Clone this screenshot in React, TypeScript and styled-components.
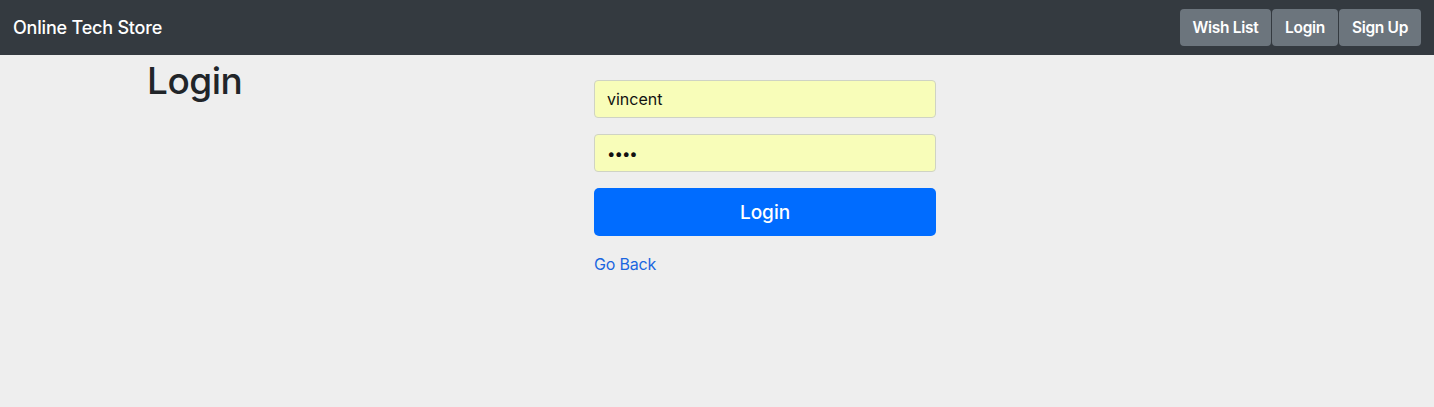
import React from "react";
import styled, { createGlobalStyle } from "styled-components";

const Global = createGlobalStyle`
  html, body { margin: 0; padding: 0; }
  body {
    background: #eeeeee;
    font-family: Inter, "Helvetica Neue", "Liberation Sans", Arial, sans-serif;
    color: #212529;
    min-height: 407px;
  }
  * { box-sizing: border-box; }
`;

const Navbar = styled.nav`
  height: 55px;
  background: #343a40;
  display: flex;
  align-items: center;
  justify-content: space-between;
  padding: 0 13px;
`;

const Brand = styled.a`
  color: #fff;
  font-size: 18px;
  font-weight: 500;
  text-decoration: none;
  letter-spacing: -0.2px;
`;

const NavButtons = styled.div`
  display: flex;
  align-items: center;
  margin-top: -1px;
`;

const NavButton = styled.button<{ $w: number }>`
  width: ${(p) => p.$w}px;
  height: 37px;
  background: #6c757d;
  color: #fff;
  border: none;
  border-radius: 4px;
  font-family: inherit;
  font-size: 15.5px;
  font-weight: 600;
  letter-spacing: -0.3px;
  padding: 0;
  cursor: pointer;
  & + & { margin-left: 1px; }
`;

const Container = styled.main`
  width: 1140px;
  margin: 0 auto;
  display: flex;
  align-items: flex-start;
`;

const TitleCol = styled.div`
  width: 447px;
`;

const Title = styled.h1`
  margin: 4px 0 0;
  font-size: 37px;
  font-weight: 500;
  line-height: 1.2;
  letter-spacing: -0.5px;
`;

const Form = styled.form`
  width: 342px;
  margin-top: 25px;
  display: flex;
  flex-direction: column;
`;

const Input = styled.input`
  height: 38px;
  width: 100%;
  background: #f8fdb9;
  border: 1px solid #cfd3c4;
  border-radius: 4px;
  padding: 0 12px;
  font-family: inherit;
  font-size: 16px;
  color: #111;
  margin-bottom: 16px;
  outline: none;
  &[type="password"] { letter-spacing: -1px; font-size: 15px; }
`;

const SubmitButton = styled.button`
  height: 48px;
  width: 100%;
  background: #006cff;
  color: #fff;
  border: none;
  border-radius: 5px;
  font-family: inherit;
  font-size: 19px;
  font-weight: 500;
  cursor: pointer;
`;

const BackLink = styled.a`
  margin-top: 18px;
  color: #1a66e0;
  font-size: 16px;
  letter-spacing: -0.2px;
  text-decoration: none;
`;

export default function App() {
  return (
    <>
      <Global />
      <Navbar>
        <Brand href="#">Online Tech Store</Brand>
        <NavButtons>
          <NavButton $w={91}>Wish List</NavButton>
          <NavButton $w={66}>Login</NavButton>
          <NavButton $w={82}>Sign Up</NavButton>
        </NavButtons>
      </Navbar>
      <Container>
        <TitleCol>
          <Title>Login</Title>
        </TitleCol>
        <Form onSubmit={(e) => e.preventDefault()}>
          <Input type="text" defaultValue="vincent" />
          <Input type="password" defaultValue="abcd" />
          <SubmitButton type="submit">Login</SubmitButton>
          <BackLink href="#">Go Back</BackLink>
        </Form>
      </Container>
    </>
  );
}
